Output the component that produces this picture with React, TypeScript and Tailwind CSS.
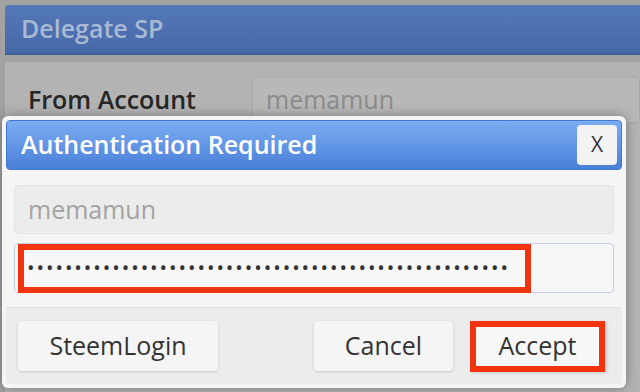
const dots = '•'.repeat(51);

const App = () => {
  return (
    <div
      className="relative w-[640px] h-[392px] overflow-hidden bg-[#a2a2a2]"
      style={{ fontFamily: '"Open Sans", "Noto Sans", sans-serif' }}
    >
      {/* Page behind the dialog (dimmed) */}
      <div className="pt-[5px] pl-[5px]">
        <div className="h-[50px] rounded-tl-[4px] border-b-2 border-[#3d5f9c] bg-gradient-to-b from-[#5479b8] to-[#4669a8] pl-[16px] flex items-center">
          <span className="text-[25px] font-semibold text-[#a9b9d4]">Delegate SP</span>
        </div>
        <div className="mt-[7px] bg-[#b3b3b3] h-[340px]">
          <div className="flex items-start pt-[15px]">
            <div className="w-[232px] pl-[23px] pt-[10px] text-[25px] font-semibold text-[#262626] leading-none">
              From Account
            </div>
            <div className="flex-1 h-[46px] rounded-[4px] border border-[#a9a9a9] bg-[#b8b8b8] ml-[15px] pl-[13px] flex items-center text-[25px] text-[#8b8b8b]">
              memamun
            </div>
          </div>
          <div className="flex items-start mt-[265px]">
            <div className="w-[232px] pl-[23px] text-[25px] font-semibold text-[#262626] leading-none">
              Amount SP
            </div>
            <div className="flex-1 ml-[15px] pl-[13px] text-[25px] text-[#555] leading-none">0.000</div>
          </div>
        </div>
      </div>

      {/* Authentication dialog */}
      <div className="absolute left-[2px] top-[116px] w-[624px] h-[272px] rounded-[6px] bg-[#f5f5f5] shadow-[0_0_12px_rgba(0,0,0,0.35)] p-[4px] flex flex-col">
        <div className="h-[50px] rounded-[4px] border border-[#4477cf] bg-gradient-to-b from-[#7badf2] to-[#4a7fd9] flex items-center justify-between pl-[14px] pr-[4px]">
          <span className="text-[25px] font-semibold text-white">Authentication Required</span>
          <div className="w-[40px] h-[40px] rounded-[4px] bg-[#f3f3f3] flex items-center justify-center text-[21px] text-[#333]">
            X
          </div>
        </div>

        <div className="px-[8px] pt-[15px] flex flex-col gap-[9px]">
          <div className="h-[49px] rounded-[4px] border border-[#e4e4e4] bg-[#ececec] pl-[13px] flex items-center text-[25px] text-[#a3a3a3]">
            memamun
          </div>
          <div className="relative h-[50px] rounded-[4px] border border-[#c2d0e2] bg-[#f7f7f7]">
            <div className="absolute left-[3px] top-0 w-[513px] h-[49px] border-[6px] border-[#f1330f]" />
            <div className="h-full pl-[12px] flex items-center text-[20px] tracking-[1.95px] text-[#333] leading-none">
              {dots}
            </div>
          </div>
        </div>

        <div className="mt-[14px] flex-1 border-t border-[#e0e0e0] bg-[#ececec] rounded-b-[4px] pl-[12px] pr-[17px] flex items-center">
          <div className="w-[200px] h-[50px] rounded-[4px] bg-[#f5f5f5] shadow-[0_1px_3px_rgba(0,0,0,0.15)] flex items-center justify-center text-[25px] text-[#333]">
            SteemLogin
          </div>
          <div className="ml-auto w-[139px] h-[50px] rounded-[4px] bg-[#f5f5f5] shadow-[0_1px_3px_rgba(0,0,0,0.15)] flex items-center justify-center text-[25px] text-[#333]">
            Cancel
          </div>
          <div className="ml-[17px] w-[135px] h-[51px] border-[6px] border-[#f1330f] bg-[#f7f7f7] shadow-[2px_1px_3px_rgba(0,0,0,0.15)] flex items-center justify-center text-[25px] text-[#333]">
            Accept
          </div>
        </div>
      </div>
    </div>
  );
};

export default App;
